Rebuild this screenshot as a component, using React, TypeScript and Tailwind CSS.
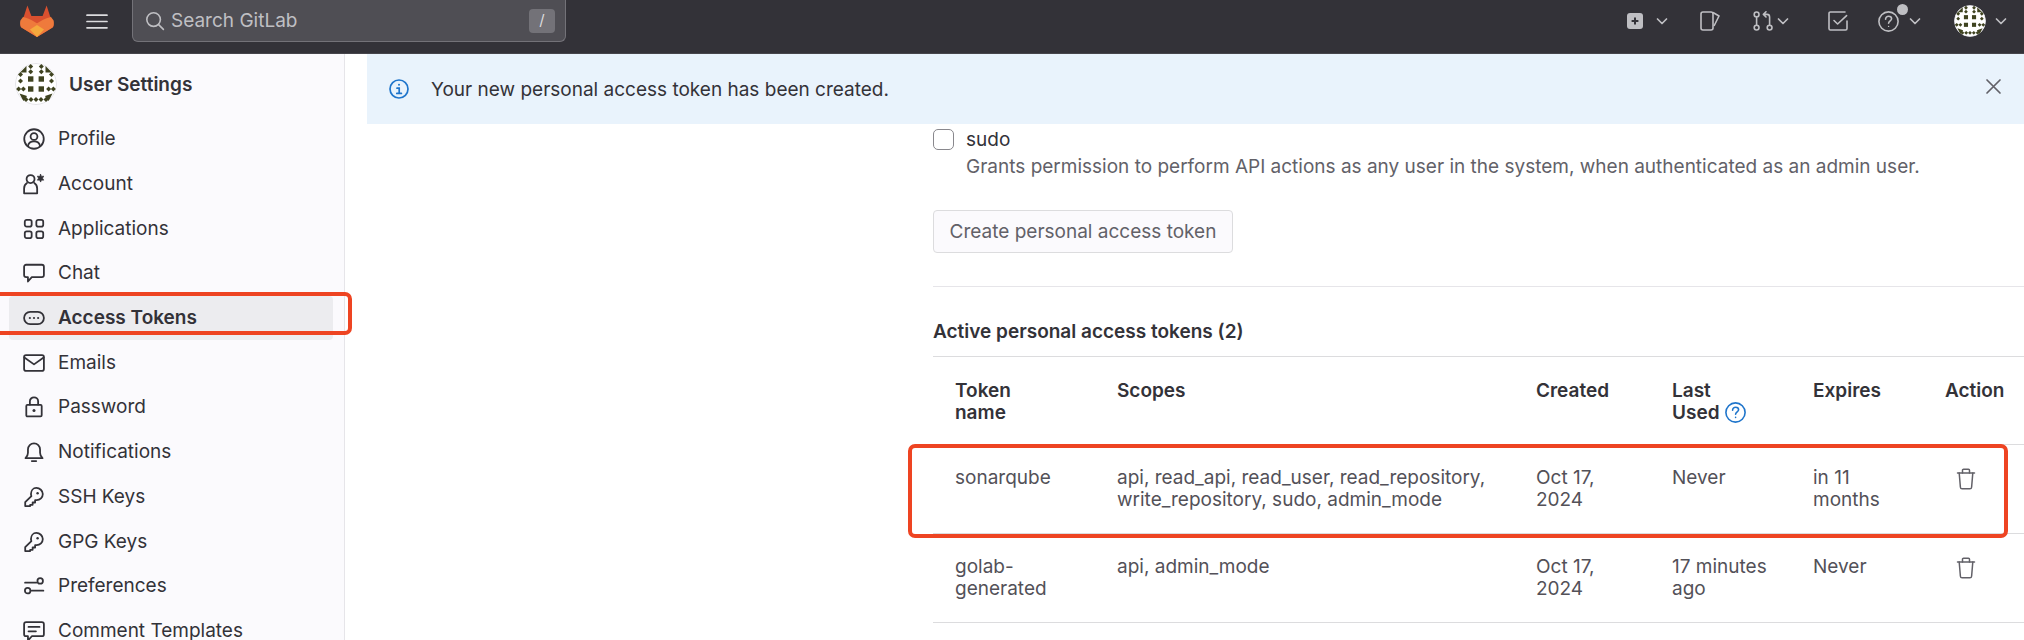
import React from "react";

const FONT = { fontFamily: '"Inter", "Liberation Sans", sans-serif' };

function Sv({ s = 24, cls = "", children }: { s?: number; cls?: string; children: React.ReactNode }) {
  return (
    <svg width={s} height={s} viewBox="0 0 16 16" fill="none" stroke="currentColor" strokeWidth={1.3} strokeLinecap="round" strokeLinejoin="round" className={"shrink-0 " + cls}>
      {children}
    </svg>
  );
}

function Identicon({ size, bg = "#fff" }: { size: number; bg?: string }) {
  const c = "#3f4320";
  const squares: [number, number][] = [[15.7, 16], [26.3, 16], [15.7, 26], [26.3, 26]];
  const diamonds: [number, number][] = [
    [15.7, 3.6], [26.3, 3.6], [15.7, 8.7], [26.3, 8.7],
    [5.5, 11.5], [36.5, 11.5], [5.5, 18], [36.5, 18],
    [3.6, 26], [8.4, 26], [33.6, 26], [38.4, 26],
    [11, 36.5], [16, 36.5], [21, 36.5], [26, 36.5], [31, 36.5],
  ];
  return (
    <svg width={size} height={size} viewBox="0 0 42 42" className="shrink-0 rounded-full">
      <circle cx="21" cy="21" r="20.5" fill={bg} stroke="#e4e3e8" strokeWidth="1" />
      {squares.map(([x, y], i) => (
        <rect key={i} x={x - 2.7} y={y - 2.7} width="5.4" height="5.4" fill={c} />
      ))}
      {diamonds.map(([x, y], i) => (
        <path key={i} d={`M${x} ${y - 2.5}L${x + 2.5} ${y}L${x} ${y + 2.5}L${x - 2.5} ${y}Z`} fill={c} />
      ))}
      <path d="M4.5 30.5L12 33L8.5 38.5Z M37.5 30.5L30 33L33.5 38.5Z M5 9.5L11.5 3L11.5 9.5Z M37 9.5L30.5 3L30.5 9.5Z" fill={c} />
    </svg>
  );
}

function Logo() {
  return (
    <svg width="34" height="32" viewBox="0 0 34 32" className="shrink-0">
      <path d="M7.4 0.5L11.4 11H22.6L26.6 0.5L30 11L33.6 19.4C34 20.6 33.6 21.6 32.6 22.4L17 32L1.4 22.4C0.4 21.6 0 20.6 0.4 19.4L4 11Z" fill="#d9502f" />
      <path d="M0.4 15.5C0 17 0 19.4 0.4 20C0.8 21 1 22 1.4 22.4L17 32L24 20.5C18 21 11 13 3 12Z" fill="#ef7a3c" />
      <path d="M33.6 15.5C34 17 34 19.4 33.6 20C33.2 21 33 22 32.6 22.4L17 32L10 20.5C16 21 23 13 31 12Z" fill="#ef7a3c" />
      <path d="M10 24.5L17 20L24 24.5L17 32Z" fill="#f5a93d" />
    </svg>
  );
}

function Chevron() {
  return (
    <svg width="14" height="14" viewBox="0 0 14 14" fill="none" stroke="#bfbfc3" strokeWidth="1.7" strokeLinecap="round" strokeLinejoin="round" className="shrink-0">
      <path d="M2.5 5L7 9.5L11.5 5" />
    </svg>
  );
}

function KeyIcon() {
  return (
    <Sv s={22} cls="text-[#333238]">
      <path d="M9.7 1.4C12.2 1.4 14.4 3.4 14.4 5.9C14.4 8.4 12.4 10.3 9.9 10.3H8.8V12H7V13.7H5.2V14.6H1.6V11.8L6.1 7.3C5.9 6.9 5.8 6.4 5.8 5.9C5.8 3.4 7.4 1.4 9.7 1.4Z" />
      <circle cx="10.6" cy="5.3" r="0.9" fill="currentColor" stroke="none" />
    </Sv>
  );
}

const navIcons: Record<string, React.ReactNode> = {
  Profile: (
    <Sv s={22} cls="text-[#333238]">
      <circle cx="8" cy="8" r="7.1" />
      <circle cx="8" cy="6.2" r="2.5" />
      <path d="M3.6 13.2C4 10.8 5.6 9.8 8 9.8S12 10.8 12.4 13.2" />
    </Sv>
  ),
  Account: (
    <Sv s={22} cls="text-[#333238]">
      <circle cx="5.5" cy="4.4" r="2.9" />
      <path d="M8.2 7.3C9.6 8.2 10.3 9.6 10.3 11.2V14.8H.8V11.2C.8 9.6 1.5 8.2 2.9 7.3" />
      <path d="M12.8 1L13.4 2.5L15 2.3L14.2 3.8L15 5.2L13.4 5L12.8 6.6L12.1 5L10.5 5.2L11.3 3.8L10.5 2.3L12.1 2.5Z" fill="currentColor" strokeWidth="0.6" />
    </Sv>
  ),
  Applications: (
    <Sv s={22} cls="text-[#333238]">
      <rect x="1.3" y="1.3" width="5" height="5" rx="1.4" />
      <rect x="9.7" y="1.3" width="5" height="5" rx="1.4" />
      <rect x="1.3" y="9.7" width="5" height="5" rx="1.4" />
      <rect x="9.7" y="9.7" width="5" height="5" rx="1.4" />
    </Sv>
  ),
  Chat: (
    <Sv s={22} cls="text-[#333238]">
      <path d="M2.3 2H13.7C14.6 2 15.2 2.6 15.2 3.5V9.5C15.2 10.4 14.6 11 13.7 11H6.4L3.6 14.2V11H2.3C1.4 11 .8 10.4 .8 9.5V3.5C.8 2.6 1.4 2 2.3 2Z" />
    </Sv>
  ),
  "Access Tokens": (
    <Sv s={22} cls="text-[#333238]">
      <rect x="0.8" y="3.6" width="14.4" height="8.8" rx="4.4" />
      <circle cx="5" cy="8" r="0.8" fill="currentColor" stroke="none" />
      <circle cx="8" cy="8" r="0.8" fill="currentColor" stroke="none" />
      <circle cx="11" cy="8" r="0.8" fill="currentColor" stroke="none" />
    </Sv>
  ),
  Emails: (
    <Sv s={22} cls="text-[#333238]">
      <rect x="0.8" y="2.2" width="14.4" height="11.6" rx="1.4" />
      <path d="M1 4L8 9L15 4" />
    </Sv>
  ),
  Password: (
    <Sv s={22} cls="text-[#333238]">
      <rect x="2.4" y="6.4" width="11.2" height="8.4" rx="0.8" />
      <path d="M5 6.2V3.9C5 2.2 6.3 1 8 1S11 2.2 11 3.9V6.2" />
      <circle cx="8" cy="10.6" r="1.1" fill="currentColor" stroke="none" />
    </Sv>
  ),
  Notifications: (
    <Sv s={22} cls="text-[#333238]">
      <path d="M1.8 12.5H14.2C13 11.5 12.4 10.4 12.4 8.6V6.2C12.4 3.6 10.4 1.8 8 1.8S3.6 3.6 3.6 6.2V8.6C3.6 10.4 3 11.5 1.8 12.5Z" />
      <path d="M6.4 14.6H9.6" />
    </Sv>
  ),
  "SSH Keys": <KeyIcon />,
  "GPG Keys": <KeyIcon />,
  Preferences: (
    <Sv s={22} cls="text-[#333238]">
      <path d="M1.5 5.6H9.6" />
      <circle cx="12.5" cy="4.3" r="2" />
      <path d="M6.4 11.4H14.8" />
      <circle cx="3.4" cy="11.4" r="2" />
    </Sv>
  ),
  "Comment Templates": (
    <Sv s={22} cls="text-[#333238]">
      <path d="M2.3 1.6H13.7C14.6 1.6 15.2 2.2 15.2 3.1V10.3C15.2 11.2 14.6 11.8 13.7 11.8H6.4L3.6 15V11.8H2.3C1.4 11.8 .8 11.2 .8 10.3V3.1C.8 2.2 1.4 1.6 2.3 1.6Z" />
      <path d="M4 5H12M4 8.2H9.4" />
    </Sv>
  ),
};

function Trash() {
  return (
    <svg width="20" height="22" viewBox="0 0 20 22" fill="none" stroke="#626168" strokeWidth="1.5" strokeLinecap="round" strokeLinejoin="round" className="ml-[11px] mt-[1px]">
      <path d="M1.5 5H18.5" />
      <path d="M6.5 5V2.2C6.5 1.6 7 1.2 7.5 1.2H12.5C13 1.2 13.5 1.6 13.5 2.2V5" />
      <path d="M3.2 5L4.4 19.2C4.5 20.2 5.2 20.8 6.1 20.8H13.9C14.8 20.8 15.5 20.2 15.6 19.2L16.8 5" />
    </svg>
  );
}

const nav = ["Profile", "Account", "Applications", "Chat", "Access Tokens", "Emails", "Password", "Notifications", "SSH Keys", "GPG Keys", "Preferences", "Comment Templates"];

function Header() {
  return (
    <header className="flex h-[54px] shrink-0 items-start border-b border-[#46454b] bg-[#333238]">
      <div className="ml-[20px] mt-[5px]"><Logo /></div>
      <svg width="22" height="15" viewBox="0 0 22 15" className="ml-[32px] mt-[14px] shrink-0" stroke="#dcdcde" strokeWidth="1.7" strokeLinecap="round">
        <path d="M1 1.2H21M1 7.5H21M1 13.8H21" />
      </svg>
      <div className="ml-[24px] flex h-[42px] w-[434px] items-center rounded-b-[6px] border border-t-0 border-[#737278] bg-[#4f4e54] pl-[12px] pr-[10px]">
        <svg width="20" height="20" viewBox="0 0 20 20" fill="none" stroke="#bfbfc3" strokeWidth="1.6" strokeLinecap="round" className="shrink-0">
          <circle cx="8.6" cy="8.6" r="6.8" />
          <path d="M13.6 13.6L18.4 18.4" />
        </svg>
        <span className="ml-[6px] text-[19px] leading-[22px] text-[#bfbfc3]">Search GitLab</span>
        <span className="ml-auto flex h-[24px] w-[26px] items-center justify-center rounded-[4px] bg-[#737278] text-[15px] text-[#dcdcde]">/</span>
      </div>
      <div className="ml-auto flex h-[42px] items-center pr-[16px]">
        <svg width="16" height="16" viewBox="0 0 16 16" className="shrink-0">
          <rect width="16" height="16" rx="3" fill="#bfbfc3" />
          <path d="M8 4.6V11.4M4.6 8H11.4" stroke="#333238" strokeWidth="2" />
        </svg>
        <span className="ml-[12px]"><Chevron /></span>
        <svg width="20" height="20" viewBox="0 0 20 20" fill="none" stroke="#bfbfc3" strokeWidth="1.6" strokeLinejoin="round" className="ml-[31px] shrink-0">
          <rect x="1" y="1" width="12" height="18" rx="2" />
          <path d="M13 1.5L19 5L14 15" />
        </svg>
        <svg width="21" height="20" viewBox="0 0 21 20" fill="none" stroke="#bfbfc3" strokeWidth="1.6" strokeLinecap="round" strokeLinejoin="round" className="ml-[33px] shrink-0">
          <circle cx="3.6" cy="3.4" r="2.4" />
          <circle cx="3.6" cy="16.6" r="2.4" />
          <circle cx="16.6" cy="16.6" r="2.4" />
          <path d="M3.6 6V14" />
          <path d="M16.6 14V6C16.6 4.4 15.6 3.4 14 3.4H10.6M13 .8L10.4 3.4L13 6" />
        </svg>
        <span className="ml-[2px]"><Chevron /></span>
        <svg width="20" height="20" viewBox="0 0 20 20" fill="none" stroke="#bfbfc3" strokeWidth="1.6" strokeLinecap="round" strokeLinejoin="round" className="ml-[38px] shrink-0">
          <path d="M17 1H2.4C1.6 1 1 1.6 1 2.4V17.6C1 18.4 1.6 19 2.4 19H17.6C18.4 19 19 18.4 19 17.6V10" />
          <path d="M6 9.5L9.6 13L18.6 4.6" />
        </svg>
        <span className="relative ml-[30px]">
          <svg width="21" height="21" viewBox="0 0 21 21" fill="none" stroke="#bfbfc3" strokeWidth="1.6" strokeLinecap="round" className="shrink-0">
            <circle cx="10.5" cy="10.5" r="9.6" />
            <path d="M7.6 8.2C7.6 6.4 9 5.2 10.6 5.2C12.4 5.2 13.6 6.4 13.6 7.8C13.6 9.8 10.6 10 10.6 12.2" />
            <circle cx="10.6" cy="15.4" r="0.7" fill="#bfbfc3" stroke="none" />
          </svg>
          <span className="absolute right-[-9px] top-[-7px] h-[11px] w-[11px] rounded-full bg-[#bfbfc3]" />
        </span>
        <span className="ml-[9px]"><Chevron /></span>
        <span className="ml-[32px]"><Identicon size={32} /></span>
        <span className="ml-[8px]"><Chevron /></span>
      </div>
    </header>
  );
}

function Sidebar() {
  return (
    <aside className="h-[586px] w-[345px] shrink-0 overflow-hidden border-r border-[#e6e5e9] bg-[#fbfafd]">
      <div className="ml-[15px] mt-[9px] flex h-[42px] items-center">
        <Identicon size={42} />
        <span className="ml-[12px] mt-[1px] text-[19px] font-semibold leading-[22px] text-[#333238]">User Settings</span>
      </div>
      <ul className="mt-[12px]">
        {nav.map((n) => {
          const active = n === "Access Tokens";
          return (
            <li key={n} className={"ml-[9px] flex h-[44.7px] w-[324px] items-center rounded-[4px] pl-[14px] " + (active ? "bg-[#ececef]" : "")}>
              {navIcons[n]}
              <span className={"ml-[13px] text-[19px] leading-[22px] text-[#333238] " + (active ? "font-semibold" : "")}>{n}</span>
            </li>
          );
        })}
      </ul>
    </aside>
  );
}

function Th({ children }: { children: React.ReactNode }) {
  return <th className="px-[22px] pb-[20px] pt-[23px] text-left align-top text-[19px] font-semibold leading-[22px] text-[#333238]">{children}</th>;
}
function Td({ children }: { children: React.ReactNode }) {
  return <td className="p-[22px] align-top text-[19px] leading-[22px] text-[#535158]">{children}</td>;
}

function Main() {
  return (
    <main className="h-[586px] min-w-0 flex-1 overflow-hidden bg-white">
      <div className="ml-[22px] flex h-[70px] items-center bg-[#e9f3fc] px-[22px]">
        <svg width="20" height="20" viewBox="0 0 20 20" fill="none" stroke="#1f75cb" strokeWidth="1.7" strokeLinecap="round" className="shrink-0">
          <circle cx="10" cy="10" r="9" />
          <path d="M8 9.2H10.2V14.2M7.8 14.4H12.4" />
          <circle cx="10" cy="5.8" r="1" fill="#1f75cb" stroke="none" />
        </svg>
        <span className="ml-[22px] mt-[1px] text-[19px] leading-[22px] text-[#333238]">Your new personal access token has been created.</span>
        <svg width="17" height="17" viewBox="0 0 17 17" fill="none" stroke="#626168" strokeWidth="1.7" strokeLinecap="round" className="mb-[6px] ml-auto shrink-0">
          <path d="M2 2L15 15M15 2L2 15" />
        </svg>
      </div>
      <div className="ml-[588px]">
        <div className="mt-[5px] flex items-start">
          <span className="h-[21px] w-[21px] shrink-0 rounded-[5px] border border-[#89888d] bg-white" />
          <div className="ml-[12px]">
            <div className="text-[19px] leading-[21px] text-[#333238]">sudo</div>
            <div className="mt-[6px] text-[19px] leading-[22px] text-[#626168]">Grants permission to perform API actions as any user in the system, when authenticated as an admin user.</div>
          </div>
        </div>
        <div className="mt-[32px] flex h-[43px] w-[300px] items-center justify-center rounded-[4px] border border-[#dcdcde] bg-[#fbfafd] pt-[2px] text-[19px] text-[#626168]">Create personal access token</div>
        <div className="mt-[33px] h-px bg-[#e6e5e9]" />
        <h5 className="mt-[34px] h-[35px] text-[19px] font-semibold leading-[22px] text-[#333238]">Active personal access tokens (2)</h5>
        <table className="w-[1091px] table-fixed border-collapse border-t border-[#dcdcde]">
          <colgroup>
            <col className="w-[162px]" />
            <col className="w-[419px]" />
            <col className="w-[136px]" />
            <col className="w-[141px]" />
            <col className="w-[132px]" />
            <col className="w-[101px]" />
          </colgroup>
          <thead>
            <tr className="border-b border-[#dcdcde]">
              <Th>Token<br />name</Th>
              <Th>Scopes</Th>
              <Th>Created</Th>
              <Th>
                Last<br />Used
                <svg width="21" height="21" viewBox="0 0 21 21" fill="none" stroke="#1f75cb" strokeWidth="1.6" strokeLinecap="round" className="ml-[5px] inline-block align-[-4px]">
                  <circle cx="10.5" cy="10.5" r="9.6" />
                  <path d="M7.6 8.2C7.6 6.4 9 5.2 10.6 5.2C12.4 5.2 13.6 6.4 13.6 7.8C13.6 9.8 10.6 10 10.6 12.2" />
                  <circle cx="10.6" cy="15.4" r="0.8" fill="#1f75cb" stroke="none" />
                </svg>
              </Th>
              <Th>Expires</Th>
              <Th>Action</Th>
            </tr>
          </thead>
          <tbody>
            <tr className="border-b border-[#dcdcde]">
              <Td>sonarqube</Td>
              <Td>api, read_api, read_user, read_repository,<br />write_repository, sudo, admin_mode</Td>
              <Td>Oct 17,<br />2024</Td>
              <Td>Never</Td>
              <Td>in 11<br />months</Td>
              <Td><Trash /></Td>
            </tr>
            <tr className="border-b border-[#dcdcde]">
              <Td>golab-<br />generated</Td>
              <Td>api, admin_mode</Td>
              <Td>Oct 17,<br />2024</Td>
              <Td>17 minutes<br />ago</Td>
              <Td>Never</Td>
              <Td><Trash /></Td>
            </tr>
          </tbody>
        </table>
      </div>
    </main>
  );
}

export default function App() {
  return (
    <div className="relative h-[640px] w-[2024px] overflow-hidden bg-white" style={FONT}>
      <Header />
      <div className="flex">
        <Sidebar />
        <Main />
      </div>
      <div className="pointer-events-none absolute left-[-8px] top-[292px] h-[43px] w-[360px] rounded-[7px] border-[4px] border-[#ee4422]" />
      <div className="pointer-events-none absolute left-[908px] top-[444px] h-[94px] w-[1100px] rounded-[7px] border-[4px] border-[#ee4422]" />
    </div>
  );
}
